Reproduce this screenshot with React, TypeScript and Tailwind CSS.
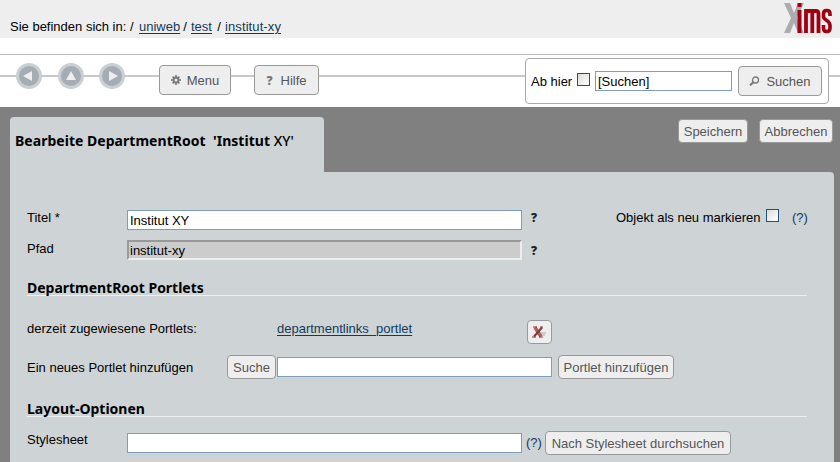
import type { ReactNode } from "react";

const buttonBase =
  "flex shrink-0 items-center justify-center rounded-[4px] border border-[#999] bg-[#eee] text-[#555] whitespace-nowrap";

function Button({ className, children }: { className: string; children: ReactNode }) {
  return <button type="button" className={`${buttonBase} ${className}`}>{children}</button>;
}

function Checkbox({ className = "" }: { className?: string }) {
  return <span role="checkbox" aria-checked="false" className={`block size-[13px] shrink-0 border border-[#1c5180] bg-linear-to-br from-[#dcdcd7] to-white ${className}`} />;
}

function NavCircle({ points, className }: { points: string; className: string }) {
  return (
    <svg viewBox="0 0 26 26" className={`size-[26px] shrink-0 ${className}`}>
      <circle cx="13" cy="13" r="13" fill="#c9cfd2" />
      <circle cx="13" cy="13" r="10" fill="#a5acb4" />
      <polygon points={points} fill="#eceeef" />
    </svg>
  );
}

function Help({ className }: { className: string }) {
  return <b className={`shrink-0 font-['Open_Sans',sans-serif] text-[12px] font-extrabold text-[#222] ${className}`}>?</b>;
}

function SectionTitle({ className, text }: { className: string; text: string }) {
  return (
    <h2 className={`ml-[17px] w-[780px] border-b border-[#eee] font-['Noto_Sans',sans-serif] text-[14px] font-bold tracking-[-0.02px] whitespace-nowrap ${className}`}>
      {text}
    </h2>
  );
}

const link = "text-[#123a5c] underline underline-offset-2";
const input = "block h-[20px] shrink-0 border border-[#7f9db9] bg-white px-[2px] outline-none";

export default function App() {
  return (
    <div className="h-[462px] w-[840px] overflow-hidden bg-white font-['Liberation_Sans',Arial,sans-serif] text-[13px] leading-[16px] text-black">
      <header className="flex h-[38px] justify-between bg-[#eee]">
        <nav className="flex pt-[19px] pl-[10px] whitespace-nowrap">
          <span className="w-[120px]">Sie befinden sich in:</span>
          <span className="w-[9px]">/</span>
          <a className={`${link} w-[40px]`}>uniweb</a>
          <span className="w-[12px] text-center">/</span>
          <a className={`${link} w-[22px]`}>test</a>
          <span className="w-[12px] text-center">/</span>
          <a className={`${link} tracking-[0.1px]`}>institut-xy</a>
        </nav>
        <svg viewBox="0 0 48 31" className="mt-[3px] mr-[8px] h-[31px] w-[48px]" fill="none">
          <path d="M0 0h6l4 10 4-10h6l-7 15 7 15h-6l-4-10-4 10H0l7-15z" fill="#aaacb0" />
          <g stroke="#a00014">
            <path d="M15.500 7v23M15.500 0v4" strokeWidth="4" />
            <path d="M22 30V6M22 8h10q2.500 0 2.500 3v19M28.300 8v22" strokeWidth="3.800" />
            <path d="M46 13v-2q0-3.500-3-3.500h-.5q-3 0-3 3.500v2.500q0 2 3 3.700t3.500 5V25q0 3.500-3 3.500h-.5q-3 0-3-3.500v-3" strokeWidth="3.600" />
          </g>
        </svg>
      </header>

      <div className="mt-[16px] h-[53px] border-t border-[#bbb]">
        <div className="flex h-[52px] items-start bg-[linear-gradient(#c8c8c8,#c8c8c8)] bg-[length:100%_2px] bg-[position:0_20px] bg-no-repeat">
          <NavCircle className="mt-[8px] ml-[16px]" points="7,13 16,8 16,18" />
          <NavCircle className="mt-[8px] ml-[16px]" points="8,17 13,8 18,17" />
          <NavCircle className="mt-[8px] ml-[15px]" points="10,8 19,13 10,18" />
          <Button className="mt-[10px] ml-[34px] h-[30px] w-[72px] gap-[6px]">
            <svg viewBox="0 0 10 10" className="size-[10px]">
              <g stroke="#777" fill="none"><circle cx="5" cy="5" r="2.500" strokeWidth="2" /><path d="M5 0v2M5 8v2M0 5h2M8 5h2M1.500 1.500l1.300 1.300M7.200 7.200l1.300 1.300M8.500 1.500L7.200 2.800M2.800 7.200L1.500 8.500" strokeWidth="1.500" /></g>
            </svg>
            <span className="pt-px">Menu</span>
          </Button>
          <Button className="mt-[10px] ml-[23px] h-[30px] w-[65px] gap-[8px]">
            <b className="pt-px font-['Open_Sans',sans-serif] text-[12px] font-extrabold text-[#777]">?</b>
            <span className="pt-px">Hilfe</span>
          </Button>
          <div className="mt-[3px] ml-[206px] flex h-[46px] w-[304px] items-center rounded-[4px] border border-[#aaa] bg-white pl-[5px]">
            <label className="w-[46px] shrink-0 pt-px whitespace-nowrap">Ab hier</label>
            <Checkbox className="-mt-[3px]" />
            <input className={`${input} ml-[5px] w-[137px]`} defaultValue="[Suchen]" />
            <Button className="ml-[6px] h-[30px] w-[84px] gap-[6px]">
              <svg viewBox="0 0 11 10" className="h-[10px] w-[11px]" fill="none" stroke="#777">
                <circle cx="6.500" cy="4" r="3" strokeWidth="1.300" /><path d="M4.300 6.200L1 9.300" strokeWidth="2" />
              </svg>
              <span className="pt-px">Suchen</span>
            </Button>
          </div>
        </div>
      </div>

      <main className="h-[355px] bg-[#808080] pt-[10px] pr-[6px] pl-[10px]">
        <div className="flex h-[55px] items-start">
          <h1 className="h-[55px] w-[314px] rounded-t-[4px] bg-[#ced3d5] pt-[16px] pl-[5px] font-['Noto_Sans',sans-serif] text-[14px] font-bold tracking-[0.03px] whitespace-pre">
            Bearbeite DepartmentRoot  'Institut <span className="font-medium">XY'</span>
          </h1>
          <Button className="mt-[2px] ml-[354px] h-[24px] w-[70px]"><span className="pt-px">Speichern</span></Button>
          <Button className="mt-[2px] ml-[11px] h-[24px] w-[74px]"><span className="pt-px">Abbrechen</span></Button>
        </div>
        <section className="h-[290px] rounded-tr-[4px] bg-[#ced3d5]">
          <div className="flex h-[68px] items-start pt-[38px] pl-[17px]">
            <label className="w-[100px] shrink-0">Titel *</label>
            <input className={`${input} w-[395px]`} defaultValue="Institut XY" />
            <Help className="ml-[9px] w-[85px]" />
            <span className="w-[150px] shrink-0 whitespace-nowrap">Objekt als neu markieren</span>
            <Checkbox className="-mt-px" />
            <a className="ml-[13px] text-[#123a5c]">(?)</a>
          </div>
          <div className="flex h-[35px] items-start pl-[17px]">
            <label className="mt-px w-[100px] shrink-0">Pfad</label>
            <input readOnly className="block h-[20px] w-[395px] border-2 border-t-[#999] border-r-[#eee] border-b-[#eee] border-l-[#999] bg-[#ccc] px-px outline-none" defaultValue="institut-xy" />
            <Help className="mt-[3px] ml-[9px]" />
          </div>
          <SectionTitle className="h-[21px] pt-[5px]" text="DepartmentRoot Portlets" />
          <div className="flex h-[59px] items-start pt-[24px] pl-[17px]">
            <span className="mt-px w-[250px] shrink-0">derzeit zugewiesene Portlets:</span>
            <span className="mt-px w-[250px] shrink-0"><a className={link}>departmentlinks_portlet</a></span>
            <Button className="h-[24px] w-[25px]">
              <svg viewBox="0 0 15 12" className="h-[12px] w-[15px]" fill="none">
                <path d="M9 7h5M9 9h4" stroke="#ccc" strokeWidth="2" />
                <path d="M3 1.500L9 10.500" stroke="#b65c5a" strokeWidth="3.500" />
                <path d="M10 1.500L2 10.500" stroke="#84373b" strokeWidth="2" />
                <path d="M1 1h4M8 1h3M0 11h4M7 11h4" stroke="#84373b" />
              </svg>
            </Button>
          </div>
          <div className="flex h-[41px] items-start pl-[17px]">
            <label className="mt-[5px] w-[200px] shrink-0">Ein neues Portlet hinzufügen</label>
            <Button className="h-[24px] w-[49px]"><span className="pt-px">Suche</span></Button>
            <input className={`${input} mt-[2px] ml-px w-[275px]`} />
            <Button className="ml-[6px] h-[24px] w-[116px]"><span className="pt-px">Portlet hinzufügen</span></Button>
          </div>
          <SectionTitle className="h-[21px] pt-[5px]" text="Layout-Optionen" />
          <div className="flex items-start pt-[14px] pl-[17px]">
            <label className="mt-px w-[100px] shrink-0">Stylesheet</label>
            <input className={`${input} mt-[2px] w-[395px]`} />
            <a className="mt-[4px] ml-[4px] w-[19px] shrink-0 text-[#123a5c]">(?)</a>
            <Button className="h-[24px] w-[186px]"><span className="pt-px">Nach Stylesheet durchsuchen</span></Button>
          </div>
        </section>
      </main>
    </div>
  );
}
